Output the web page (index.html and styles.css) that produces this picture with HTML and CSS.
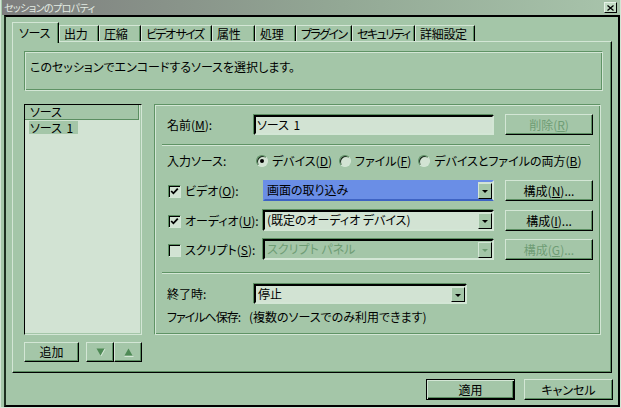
FILE: index.html
```html
<!DOCTYPE html>
<html lang="ja">
<head>
<meta charset="utf-8">
<title>セッションのプロパティ</title>
<link rel="stylesheet" href="styles.css">
</head>
<body>
<div class="window">
  <div class="titlebar">
    <span class="title">セッションのプロパティ</span>
    <span class="close"><svg width="7" height="6" viewBox="0 0 7 6"><path d="M0.5 0.5 L6.5 5.5 M6.5 0.5 L0.5 5.5" stroke="#000" stroke-width="1.3"/></svg></span>
  </div>
  <div class="client">
    <div class="tabs">
      <div class="tab active t-src">ソース</div>
      <div class="tab t-out">出力</div>
      <div class="tab t-cmp">圧縮</div>
      <div class="tab kana t-vsz">ビデオ サイズ</div>
      <div class="tab t-att">属性</div>
      <div class="tab t-prc">処理</div>
      <div class="tab kana t-plg">プラグイン</div>
      <div class="tab kana t-sec">セキュリティ</div>
      <div class="tab t-adv">詳細設定</div>
    </div>
    <div class="panel">
      <div class="desc">このセッションでエンコードするソースを選択します。</div>
      <div class="main">
        <div class="left">
          <div class="list">
            <div class="list-head">ソース</div>
            <div class="list-row"><span class="sel">ソース 1</span></div>
          </div>
          <div class="list-btns">
            <div class="btn add">追加</div>
            <div class="arrows">
              <div class="btn arrow"><svg width="11" height="10" viewBox="0 0 11 10"><path d="M1.5 1.5 H9.5 L5.5 8.5 Z" fill="#4e8a55"/><path d="M6 9 L10 2" stroke="#d3e6d5" stroke-width="1"/></svg></div>
              <div class="btn arrow"><svg width="11" height="10" viewBox="0 0 11 10"><path d="M5.5 1.5 L9.5 8.5 H1.5 Z" fill="#4e8a55"/><path d="M1.5 9.5 H10.5" stroke="#d3e6d5" stroke-width="1"/></svg></div>
            </div>
          </div>
        </div>
        <div class="group">
          <div class="row r-name">
            <span class="label">名前(<u>M</u>):</span>
            <div class="field name-field">ソース 1</div>
            <div class="btn cfg disabled">削除(<u>R</u>)</div>
          </div>
          <div class="sep"></div>
          <div class="row r-radio">
            <span class="label">入力ソース:</span>
            <span class="radio on"></span><span class="opt">デバイス(<u>D</u>)</span>
            <span class="radio"></span><span class="opt">ファイル(<u>F</u>)</span>
            <span class="radio"></span><span class="opt">デバイスとファイルの両方(<u>B</u>)</span>
          </div>
          <div class="row r-combo r-video">
            <span class="cklabel"><span class="check on"><svg width="9" height="9" viewBox="0 0 9 9"><path d="M1.2 4 L3.4 6.3 L7.8 1.6" fill="none" stroke="#000" stroke-width="1.8"/></svg></span>ビデオ(<u>O</u>):</span>
            <div class="combo focus"><span class="combo-text">画面の取り込み</span><span class="drop"><i></i></span></div>
            <div class="btn cfg">構成(<u>N</u>)...</div>
          </div>
          <div class="row r-combo r-audio">
            <span class="cklabel"><span class="check on"><svg width="9" height="9" viewBox="0 0 9 9"><path d="M1.2 4 L3.4 6.3 L7.8 1.6" fill="none" stroke="#000" stroke-width="1.8"/></svg></span>オーディオ(<u>U</u>):</span>
            <div class="combo"><span class="combo-text">(既定のオーディオ デバイス)</span><span class="drop"><i></i></span></div>
            <div class="btn cfg">構成(<u>I</u>)...</div>
          </div>
          <div class="row r-combo r-script">
            <span class="cklabel"><span class="check"></span>スクリプト(<u>S</u>):</span>
            <div class="combo disabled"><span class="combo-text">スクリプト パネル</span><span class="drop"><i></i></span></div>
            <div class="btn cfg disabled">構成(<u>G</u>)...</div>
          </div>
          <div class="sep sep2"></div>
          <div class="row r-end">
            <span class="label">終了時:</span>
            <div class="combo end-combo"><span class="combo-text">停止</span><span class="drop"><i></i></span></div>
          </div>
          <div class="row r-file">
            <span class="file-label">ファイルへ保存:</span>
            <span>(複数のソースでのみ利用できます)</span>
          </div>
        </div>
      </div>
    </div>
    <div class="footer">
      <div class="btn foot default">適用</div>
      <div class="btn foot">キャンセル</div>
    </div>
  </div>
</div>
</body>
</html>
```

FILE: styles.css
```css
* { box-sizing: border-box; }
html, body { margin: 0; padding: 0; }
body {
  width: 621px;
  height: 408px;
  overflow: hidden;
  background: #a4c6a8;
  font-family: "Noto Sans CJK JP", "Noto Sans", sans-serif;
  font-size: 12px;
  line-height: 14px;
  color: #000;
  font-feature-settings: "palt";
}
u { text-decoration: underline; text-underline-offset: 1px; }

.window {
  width: 621px;
  height: 408px;
  background: #a4c6a8;
  border: 1px solid #d3e6d5;
  border-top: none;
  display: flex;
  flex-direction: column;
}

.titlebar {
  height: 15px;
  flex: none;
  background: linear-gradient(to right, #7e7e7e, #93a895 55%, #a8c4ab);
  display: flex;
  align-items: center;
  justify-content: space-between;
  padding: 0 3px 0 2px;
  margin-left: 1px;
}
.title { color: #e4ece4; font-size: 10px; line-height: 15px; letter-spacing: -0.6px; }
.close {
  width: 13px;
  height: 11px;
  background: #c2dcc5;
  border: 1px solid;
  border-color: #e6f2e7 #000 #000 #e6f2e7;
  display: flex;
  align-items: center;
  justify-content: center;
}

.client {
  flex: 1;
  margin-left: 3px;
  border: 2px solid #000;
  border-left-color: #1c2e1e;
  display: flex;
  flex-direction: column;
}

.tabs {
  height: 24px;
  flex: none;
  display: flex;
  align-items: flex-start;
  padding-left: 6px;
}
.tab {
  height: 17px;
  margin-top: 8px;
  padding: 1px 0 0 4px;
  border-top: 1px solid #d3e6d5;
  border-left: 1px solid #d3e6d5;
  border-right: 1px solid #000;
  box-shadow: inset -1px 0 0 #5b8e61;
  white-space: nowrap;
  line-height: 14px;
  flex: none;
  letter-spacing: -0.3px;
  overflow: hidden;
}
.tab.kana { letter-spacing: -1.6px; }
.tab.active {
  height: 21px;
  margin-top: 5px;
  margin-bottom: -1px;
  padding: 3px 0 0 6px;
  background: #a4c6a8;
  position: relative;
  z-index: 1;
}
.t-src { width: 47px; }
.t-out { width: 40px; }
.t-cmp { width: 42px; }
.t-vsz { width: 71px; }
.t-att { width: 43px; }
.t-prc { width: 41px; }
.t-plg { width: 56px; }
.t-sec { width: 63px; }
.t-adv { width: 60px; }

.panel {
  width: 600px;
  height: 332px;
  flex: none;
  margin-left: 6px;
  border: 1px solid;
  border-color: #d3e6d5 #000 #000 #d3e6d5;
  box-shadow: inset -1px -1px 0 #5b8e61;
  padding: 9px 8px 0 11px;
}

.desc {
  height: 40px;
  border: 1px solid;
  border-color: #5f9365 #d3e6d5 #d3e6d5 #5f9365;
  box-shadow: inset 1px 1px 0 #d3e6d5, inset -1px -1px 0 #5f9365;
  padding: 8px 0 0 5px;
}

.main {
  display: flex;
  gap: 12px;
  margin-top: 13px;
}

.left { width: 118px; flex: none; }
.list {
  height: 231px;
  background: #d2e3d3;
  border: 1px solid;
  border-color: #000 #d3e6d5 #d3e6d5 #000;
  box-shadow: inset -1px -1px 0 #a4c6a8;
  padding: 0 2px 0 0;
}
.list-head {
  height: 15px;
  background: #a4c6a8;
  border-right: 1px solid #5b8e61;
  border-bottom: 1px solid #5b8e61;
  padding-left: 5px;
  line-height: 14px;
}
.list-row { padding: 1px 0 0 4px; }
.sel {
  display: inline-block;
  background: #a4c6a8;
  height: 13px;
  line-height: 13px;
  padding: 0 5px 0 1px;
  word-spacing: 2px;
}
.list-btns {
  margin-top: 7px;
  display: flex;
  gap: 7px;
}
.arrows { display: flex; }

.btn {
  background: #a4c6a8;
  border: 1px solid;
  border-color: #d3e6d5 #000 #000 #d3e6d5;
  box-shadow: inset -1px -1px 0 #5b8e61;
  display: flex;
  align-items: center;
  justify-content: center;
  white-space: nowrap;
}
.btn.add { width: 56px; height: 20px; }
.btn.arrow { width: 28px; height: 20px; }
.btn.cfg { width: 88px; height: 21px; margin-left: auto; }
.btn.disabled { color: #6f9d75; }

.group {
  width: 447px;
  height: 231px;
  flex: none;
  border: 1px solid;
  border-color: #5f9365 #d3e6d5 #d3e6d5 #5f9365;
  box-shadow: inset 1px 1px 0 #d3e6d5, inset -1px -1px 0 #5f9365;
  padding: 9px 7px 0 12px;
  display: flex;
  flex-direction: column;
}
.row { display: flex; align-items: center; white-space: nowrap; }
.label { width: 87px; flex: none; }
.r-name { height: 21px; }
.sep {
  height: 2px;
  margin: 9px 3px 0 -5px;
  border-top: 1px solid #5f9365;
  border-bottom: 1px solid #d3e6d5;
}
.sep2 { margin-top: 12px; }

.field {
  height: 20px;
  background: #d2e3d3;
  border: 2px solid;
  border-color: #000 #d3e6d5 #d3e6d5 #000;
  box-shadow: -1px -1px 0 #5b8e61;
  padding-left: 1px;
  line-height: 15px;
  word-spacing: 2px;
}
.name-field { width: 240px; }

.r-radio { height: 14px; margin-top: 8px; }
.r-radio .label { width: 89px; }
.radio {
  width: 12px;
  height: 12px;
  border-radius: 50%;
  border: 1px solid;
  border-color: #5b8e61 #d3e6d5 #d3e6d5 #5b8e61;
  background: #d2e3d3;
  box-shadow: inset 1px 1px 0 #1a2a1c;
  margin-right: 4px;
  display: flex;
  align-items: center;
  justify-content: center;
  flex: none;
}
.radio.on::after {
  content: "";
  width: 4px;
  height: 4px;
  border-radius: 50%;
  background: #000;
}
.opt { margin-right: 7px; }

.r-combo { height: 21px; }
.r-video { margin-top: 12px; }
.r-audio { margin-top: 9px; }
.r-script { margin-top: 8px; }
.cklabel { width: 96px; flex: none; display: flex; align-items: center; }
.check {
  width: 13px;
  height: 13px;
  margin: 2px 4px 0 1px;
  background: #d2e3d3;
  border: 1px solid;
  border-color: #5b8e61 #d3e6d5 #d3e6d5 #5b8e61;
  box-shadow: inset 1px 1px 0 #000;
  display: flex;
  align-items: center;
  justify-content: center;
  flex: none;
}

.combo {
  width: 231px;
  height: 21px;
  background: #d2e3d3;
  border: 2px solid;
  border-color: #000 #d3e6d5 #d3e6d5 #000;
  box-shadow: -1px -1px 0 #5b8e61;
  display: flex;
  align-items: stretch;
}
.combo-text { flex: 1; padding-left: 2px; line-height: 16px; overflow: hidden; }
.combo.focus { border-color: #6a8ee6 #d3e6d5 #3e63c4 #6a8ee6; box-shadow: none; }
.combo.focus .combo-text { background: #6a8ee6; }
.combo.disabled { background: #a4c6a8; color: #6f9d75; }
.drop {
  width: 14px;
  flex: none;
  background: #a4c6a8;
  border: 1px solid;
  border-color: #d3e6d5 #000 #000 #d3e6d5;
  display: flex;
  align-items: center;
  justify-content: center;
  margin: 1px 0 0 0;
}
.drop i {
  width: 0;
  height: 0;
  border-left: 3px solid transparent;
  border-right: 3px solid transparent;
  border-top: 3px solid #000;
  margin-top: 1px;
}
.combo.disabled .drop i { border-top-color: #6f9d75; }

.r-end { height: 20px; margin-top: 10px; }
.end-combo { width: 213px; height: 20px; }
.r-file { height: 14px; margin-top: 6px; }
.file-label { width: 82px; flex: none; letter-spacing: -1px; }

.footer {
  height: 21px;
  flex: none;
  margin-top: 6px;
  display: flex;
  justify-content: flex-end;
  gap: 9px;
  padding-right: 5px;
}
.btn.foot { width: 89px; height: 21px; }
.btn.default {
  border: 1px solid #000;
  box-shadow: inset 1px 1px 0 #d3e6d5, inset -1px -1px 0 #000, inset -2px -2px 0 #5b8e61;
}
```
